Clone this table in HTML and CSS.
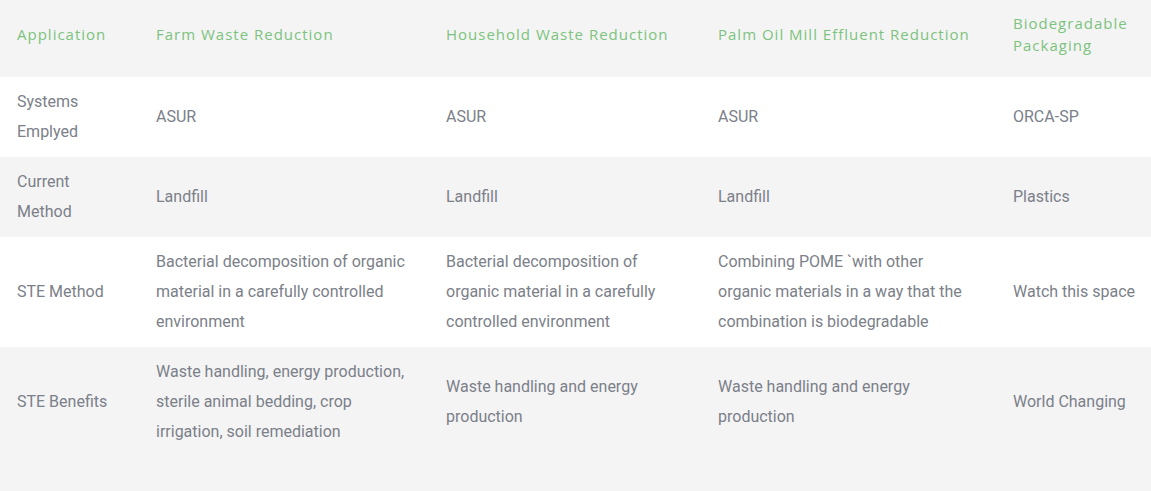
FILE: index.html
```html
<!DOCTYPE html>
<html lang="en">
<head>
<meta charset="utf-8">
<title>Applications</title>
<link rel="stylesheet" href="styles.css">
</head>
<body>
<table class="apps">
  <colgroup>
    <col class="c1"><col class="c2"><col class="c3"><col class="c4"><col class="c5">
  </colgroup>
  <thead>
    <tr>
      <th>Application</th>
      <th>Farm Waste Reduction</th>
      <th>Household Waste Reduction</th>
      <th>Palm Oil Mill Effluent Reduction</th>
      <th>Biodegradable Packaging</th>
    </tr>
  </thead>
  <tbody>
    <tr class="short">
      <td>Systems Emplyed</td>
      <td>ASUR</td>
      <td>ASUR</td>
      <td>ASUR</td>
      <td>ORCA-SP</td>
    </tr>
    <tr class="short alt">
      <td>Current Method</td>
      <td>Landfill</td>
      <td>Landfill</td>
      <td>Landfill</td>
      <td>Plastics</td>
    </tr>
    <tr>
      <td>STE Method</td>
      <td>Bacterial decomposition of organic material in a carefully controlled environment</td>
      <td>Bacterial decomposition of organic material in a carefully controlled environment</td>
      <td>Combining POME `with other organic materials in a way that the combination is biodegradable</td>
      <td>Watch this space</td>
    </tr>
    <tr class="alt">
      <td>STE Benefits</td>
      <td>Waste handling, energy production, sterile animal bedding, crop irrigation, soil remediation</td>
      <td>Waste handling and energy production</td>
      <td>Waste handling and energy production</td>
      <td>World Changing</td>
    </tr>
  </tbody>
</table>
</body>
</html>
```
FILE: styles.css
```css
html, body {
  margin: 0;
  padding: 0;
  background: #f4f4f5;
}

.apps {
  width: 1151px;
  table-layout: fixed;
  border-collapse: collapse;
  font-family: Roboto, "Liberation Sans", sans-serif;
}

.c1 { width: 139px; }
.c2 { width: 290px; }
.c3 { width: 272px; }
.c4 { width: 295px; }
.c5 { width: 155px; }

.apps th {
  text-align: left;
  font-family: "Open Sans", "Noto Sans", sans-serif;
  font-weight: 400;
  font-size: 15px;
  letter-spacing: 1px;
  line-height: 22px;
  color: #7cc37e;
  height: 44px;
  padding: 12px 17px 21px 17px;
  vertical-align: middle;
  background: #f4f4f4;
}

.apps th:last-child {
  padding-right: 8px;
}

.apps td {
  font-size: 16px;
  line-height: 30px;
  color: #7b8089;
  padding: 10px 17px;
  vertical-align: middle;
  background: #ffffff;
}

.apps td:last-child {
  padding-right: 8px;
}

.apps tr.alt td {
  background: #f4f4f5;
}

.apps tr.short td {
  height: 60px;
}
```
